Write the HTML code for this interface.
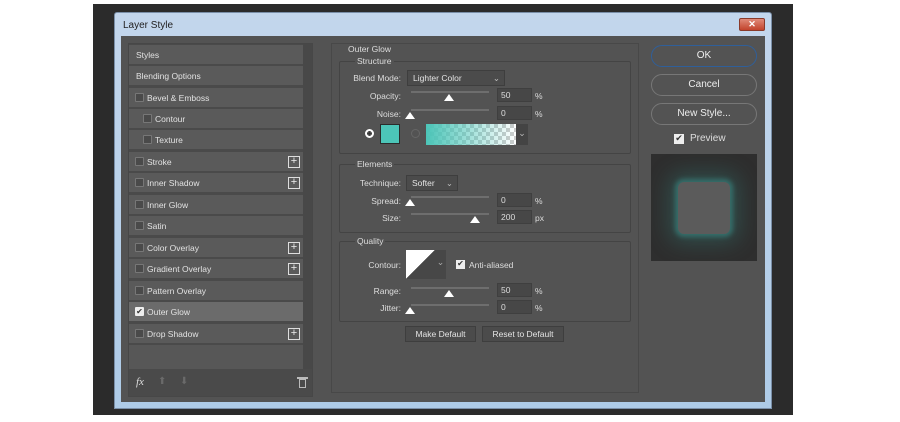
<!DOCTYPE html><html><head><style>
*{box-sizing:border-box;margin:0;padding:0}
body{width:900px;height:422px;background:#fff;position:relative;font-family:"Liberation Sans",sans-serif;overflow:hidden}
.a{position:absolute}
.t{position:absolute;font-size:8.5px;color:#ddd;white-space:nowrap}
.r{text-align:right}
.item{position:absolute;left:129px;width:174px;height:20px;background:#5a5a5a;border-bottom:1px solid #4a4a4a;font-size:8.5px;color:#e2e2e2;line-height:20px}
.cb{position:absolute;width:9px;height:9px;border:1px solid #777;background:#4a4a4a;border-radius:1px}
.plus{position:absolute;left:159px;top:4px;width:12px;height:12px;border:1px solid #ddd;color:#eee;font-size:11px;line-height:9px;text-align:center}
.box{position:absolute;border:1px solid #444;border-radius:2px}
.fld{position:absolute;left:497px;width:35px;height:14px;background:#474747;border:1px solid #3f3f3f;font-size:8.5px;color:#ddd;padding-left:3px;line-height:12px}
.trk{position:absolute;left:411px;width:78px;height:2px;background:#6e6e6e}
.th{position:absolute;width:0;height:0;border-left:5px solid transparent;border-right:5px solid transparent;border-bottom:7px solid #fff}
.btn{position:absolute;left:651px;width:106px;height:22px;border:1px solid #777;border-radius:11px;color:#eee;font-size:10px;text-align:center;line-height:20px}
.sb{position:absolute;height:16px;background:#4b4b4b;border:1px solid #3e3e3e;color:#e4e4e4;font-size:8.5px;text-align:center;line-height:14px}
</style></head><body>
<div class="a" style="left:93px;top:4px;width:700px;height:411px;background:#2b2b2b"></div>
<div class="a" style="left:114px;top:12px;width:658px;height:397px;background:linear-gradient(#c3d6ec,#aecbe7);border:1px solid #7a8fa8;border-radius:3px 3px 0 0"></div>
<div class="t" style="left:123px;top:20px;font-size:10px;color:#222">Layer Style</div>
<div class="a" style="left:739px;top:18px;width:26px;height:13px;background:linear-gradient(#e08a78,#c2432c);border:1px solid #8a3a2a;border-radius:2px;color:#fff;font-size:9px;text-align:center;line-height:11px;font-weight:bold">✕</div>
<div class="a" style="left:121px;top:36px;width:644px;height:366px;background:#535353"></div>
<div class="a" style="left:128px;top:43px;width:185px;height:354px;background:#4a4a4a;border:1px solid #474747"></div>
<div class="a" style="left:303px;top:44px;width:9px;height:325px;background:#484848"></div>
<div class="item" style="top:45px;padding-left:7px">Styles</div>
<div class="item" style="top:66px;padding-left:7px">Blending Options</div>
<div class="item" style="top:88px"><div class="cb" style="left:6px;top:5px"></div><span style="position:absolute;left:18px">Bevel &amp; Emboss</span></div>
<div class="item" style="top:109px"><div class="cb" style="left:14px;top:5px"></div><span style="position:absolute;left:26px">Contour</span></div>
<div class="item" style="top:130px"><div class="cb" style="left:14px;top:5px"></div><span style="position:absolute;left:26px">Texture</span></div>
<div class="item" style="top:152px"><div class="cb" style="left:6px;top:5px"></div><span style="position:absolute;left:18px">Stroke</span><div class="plus">+</div></div>
<div class="item" style="top:173px"><div class="cb" style="left:6px;top:5px"></div><span style="position:absolute;left:18px">Inner Shadow</span><div class="plus">+</div></div>
<div class="item" style="top:195px"><div class="cb" style="left:6px;top:5px"></div><span style="position:absolute;left:18px">Inner Glow</span></div>
<div class="item" style="top:216px"><div class="cb" style="left:6px;top:5px"></div><span style="position:absolute;left:18px">Satin</span></div>
<div class="item" style="top:238px"><div class="cb" style="left:6px;top:5px"></div><span style="position:absolute;left:18px">Color Overlay</span><div class="plus">+</div></div>
<div class="item" style="top:259px"><div class="cb" style="left:6px;top:5px"></div><span style="position:absolute;left:18px">Gradient Overlay</span><div class="plus">+</div></div>
<div class="item" style="top:281px"><div class="cb" style="left:6px;top:5px"></div><span style="position:absolute;left:18px">Pattern Overlay</span></div>
<div class="item" style="top:302px;background:#6b6b6b"><div class="cb" style="left:6px;top:5px;background:#eee;border-color:#eee;color:#333;font-size:8px;line-height:7px;text-align:center">✔</div><span style="position:absolute;left:18px">Outer Glow</span></div>
<div class="item" style="top:324px"><div class="cb" style="left:6px;top:5px"></div><span style="position:absolute;left:18px">Drop Shadow</span><div class="plus">+</div></div>
<div class="a" style="left:129px;top:345px;width:174px;height:24px;background:#575757"></div>
<div class="t" style="left:136px;top:376px;font-size:11px;font-style:italic;font-family:'Liberation Serif',serif;color:#ddd">fx</div>
<div class="t" style="left:158px;top:376px;color:#6a6a6a;font-size:10px">⬆</div>
<div class="t" style="left:180px;top:376px;color:#6a6a6a;font-size:10px">⬇</div>
<div class="a" style="left:297px;top:377px;width:11px;height:2px;background:#bbb"></div>
<div class="a" style="left:299px;top:379px;width:7px;height:9px;border:1px solid #bbb"></div>
<div class="a" style="left:331px;top:43px;width:308px;height:350px;border:1px solid #484848;background:#535353"></div>
<div class="t" style="left:348px;top:44px">Outer Glow</div>
<div class="box" style="left:339px;top:61px;width:292px;height:93px"></div>
<div class="t" style="left:355px;top:56px;background:#535353;padding:0 2px">Structure</div>
<div class="t r" style="left:340px;width:61px;top:73px">Blend Mode:</div>
<div class="sb" style="left:407px;top:70px;width:98px;text-align:left;padding-left:5px">Lighter Color<span style="position:absolute;right:4px;color:#bbb">⌄</span></div>
<div class="t r" style="left:340px;width:61px;top:91px">Opacity:</div>
<div class="trk" style="top:91px"></div><div class="th" style="left:444px;top:94px"></div>
<div class="fld" style="top:88px">50</div><div class="t" style="left:535px;top:91px">%</div>
<div class="t r" style="left:340px;width:61px;top:109px">Noise:</div>
<div class="trk" style="top:109px"></div><div class="th" style="left:405px;top:112px"></div>
<div class="fld" style="top:106px">0</div><div class="t" style="left:535px;top:109px">%</div>
<div class="a" style="left:365px;top:129px;width:9px;height:9px;border-radius:50%;background:#fff;border:2px solid #fff;box-shadow:inset 0 0 0 1px #333"></div>
<div class="a" style="left:368px;top:132px;width:3px;height:3px;border-radius:50%;background:#333"></div>
<div class="a" style="left:380px;top:124px;width:20px;height:20px;background:#4cc5b8;border:1px solid #2b2b2b"></div>
<div class="a" style="left:411px;top:129px;width:9px;height:9px;border-radius:50%;border:1px solid #666"></div>
<div class="a" style="left:426px;top:124px;width:90px;height:21px;background:linear-gradient(90deg,#4cc5b8,rgba(76,197,184,0)),repeating-conic-gradient(#ccc 0 25%,#fff 0 50%) 0 0/8px 8px"></div>
<div class="a" style="left:516px;top:124px;width:12px;height:21px;background:#444;color:#bbb;font-size:9px;text-align:center;line-height:18px">⌄</div>
<div class="box" style="left:339px;top:164px;width:292px;height:69px"></div>
<div class="t" style="left:355px;top:159px;background:#535353;padding:0 2px">Elements</div>
<div class="t r" style="left:340px;width:61px;top:178px">Technique:</div>
<div class="sb" style="left:406px;top:175px;width:52px;text-align:left;padding-left:5px">Softer<span style="position:absolute;right:4px;color:#bbb">⌄</span></div>
<div class="t r" style="left:340px;width:61px;top:196px">Spread:</div>
<div class="trk" style="top:196px"></div><div class="th" style="left:405px;top:199px"></div>
<div class="fld" style="top:193px">0</div><div class="t" style="left:535px;top:196px">%</div>
<div class="t r" style="left:340px;width:61px;top:213px">Size:</div>
<div class="trk" style="top:213px"></div><div class="th" style="left:470px;top:216px"></div>
<div class="fld" style="top:210px">200</div><div class="t" style="left:535px;top:213px">px</div>
<div class="box" style="left:339px;top:241px;width:292px;height:81px"></div>
<div class="t" style="left:355px;top:236px;background:#535353;padding:0 2px">Quality</div>
<div class="t r" style="left:340px;width:61px;top:260px">Contour:</div>
<div class="a" style="left:406px;top:250px;width:29px;height:29px;background:linear-gradient(to bottom right,#fff 50%,#474747 50%)"></div>
<div class="a" style="left:435px;top:250px;width:11px;height:29px;background:#474747;color:#aaa;font-size:9px;text-align:center;line-height:24px">⌄</div>
<div class="a" style="left:456px;top:260px;width:9px;height:9px;background:#eee;color:#333;font-size:8px;line-height:8px;text-align:center">✔</div>
<div class="t" style="left:469px;top:260px">Anti-aliased</div>
<div class="t r" style="left:340px;width:61px;top:286px">Range:</div>
<div class="trk" style="top:287px"></div><div class="th" style="left:444px;top:290px"></div>
<div class="fld" style="top:283px">50</div><div class="t" style="left:535px;top:286px">%</div>
<div class="t r" style="left:340px;width:61px;top:303px">Jitter:</div>
<div class="trk" style="top:304px"></div><div class="th" style="left:405px;top:307px"></div>
<div class="fld" style="top:300px">0</div><div class="t" style="left:535px;top:303px">%</div>
<div class="sb" style="left:405px;top:326px;width:71px">Make Default</div>
<div class="sb" style="left:482px;top:326px;width:82px">Reset to Default</div>
<div class="btn" style="top:45px;border-color:#2f5f9a">OK</div>
<div class="btn" style="top:74px">Cancel</div>
<div class="btn" style="top:103px">New Style...</div>
<div class="a" style="left:674px;top:134px;width:10px;height:10px;background:#eee;color:#333;font-size:9px;line-height:9px;text-align:center">✔</div>
<div class="t" style="left:690px;top:133px;font-size:10px">Preview</div>
<div class="a" style="left:651px;top:154px;width:106px;height:107px;background:#2e2e2e;overflow:hidden">
<div class="a" style="left:27px;top:28px;width:52px;height:52px;background:#5b5b5b;border-radius:6px;box-shadow:0 0 5px 3px #356e6a,0 0 20px 10px rgba(55,120,115,.4)"></div></div>
</body></html>
